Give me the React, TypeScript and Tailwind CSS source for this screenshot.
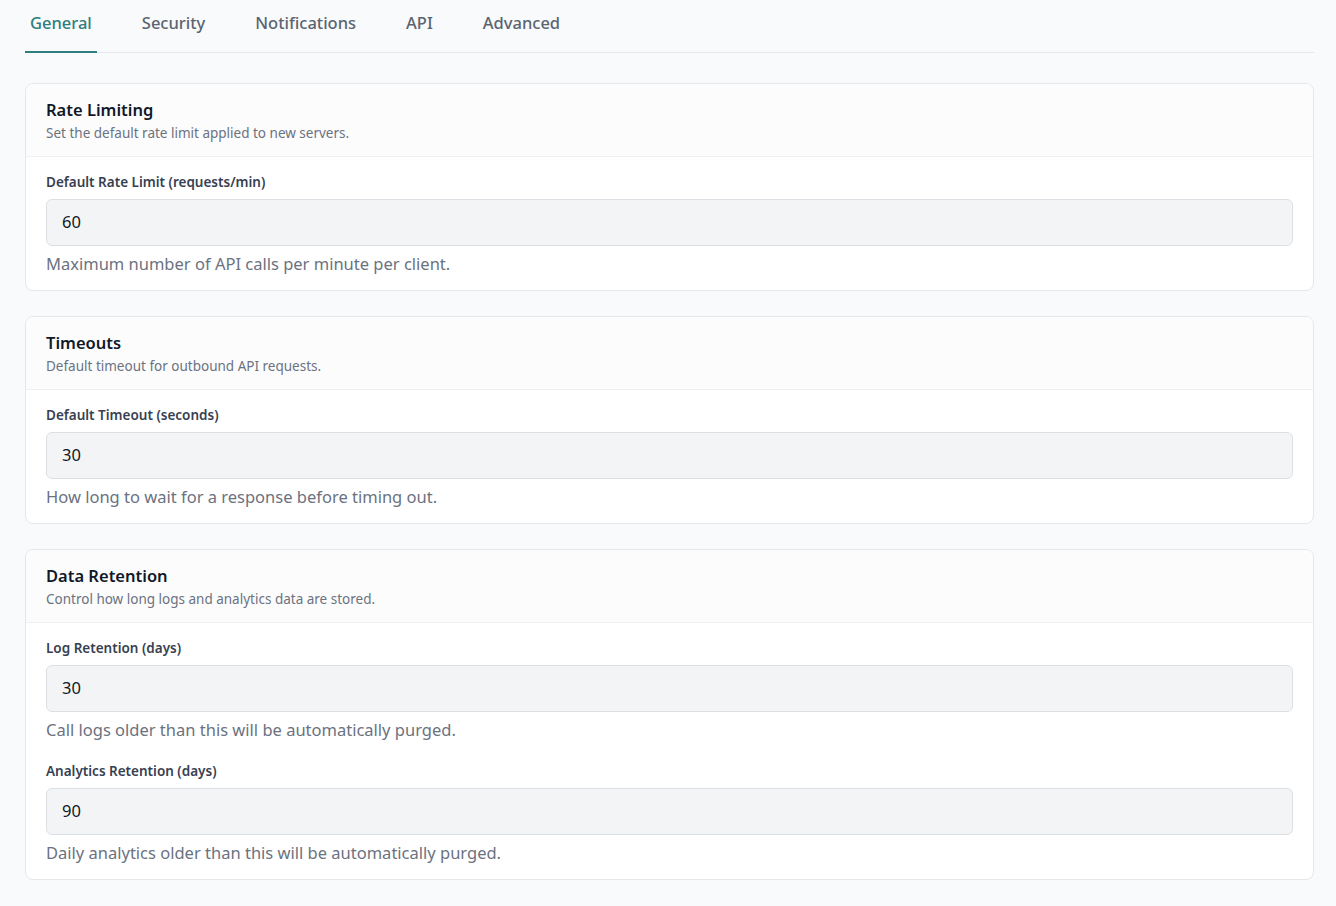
import React from "react";

const tabs = ["General", "Security", "Notifications", "API", "Advanced"];

function Field({ label, value, help }: { label: string; value: string; help: string }) {
  return (
    <div className="flex flex-col">
      <div className="text-[13.5px] font-semibold text-[#374151] leading-5">{label}</div>
      <div className="mt-[7px] h-[47px] rounded-md border border-[#dcdfe3] bg-[#f3f4f6] px-[15px] flex items-center text-[16.5px] text-[#111827]">{value}</div>
      <div className="mt-[6px] text-[16.5px] text-[#6b7280] leading-6">{help}</div>
    </div>
  );
}

function Card({ title, desc, children }: { title: string; desc: string; children: React.ReactNode }) {
  return (
    <div className="rounded-lg border border-[#e5e7eb] bg-white overflow-hidden">
      <div className="bg-[#fcfcfd] border-b border-[#eef0f2] px-[20px] pt-[14px] pb-[13px]">
        <div className="text-[16.5px] font-semibold text-[#111827] leading-6">{title}</div>
        <div className="text-[13.5px] text-[#6b7280] leading-5 mt-[1px]">{desc}</div>
      </div>
      <div className="px-[20px] pt-[15px] pb-[14px] flex flex-col gap-[19px]">{children}</div>
    </div>
  );
}

export default function App() {
  return (
    <div className="min-h-[906px] bg-[#f8fafc] px-[25px] pr-[22px]" style={{ fontFamily: '"Noto Sans", "Open Sans", sans-serif' }}>
      <div className="flex gap-[40px] border-b border-[#e5e7eb] h-[53px]">
        {tabs.map((t, i) => (
          <div key={t} className={`px-[5px] pt-[11px] text-[16.5px] font-medium h-[53px] border-b-2 ${i === 0 ? "text-[#2f7d7d] border-[#2f7d7d]" : "text-[#5b6470] border-transparent"}`}>{t}</div>
        ))}
      </div>
      <div className="flex flex-col gap-[25px] pt-[30px] pb-[20px]">
        <Card title="Rate Limiting" desc="Set the default rate limit applied to new servers.">
          <Field label="Default Rate Limit (requests/min)" value="60" help="Maximum number of API calls per minute per client." />
        </Card>
        <Card title="Timeouts" desc="Default timeout for outbound API requests.">
          <Field label="Default Timeout (seconds)" value="30" help="How long to wait for a response before timing out." />
        </Card>
        <Card title="Data Retention" desc="Control how long logs and analytics data are stored.">
          <Field label="Log Retention (days)" value="30" help="Call logs older than this will be automatically purged." />
          <Field label="Analytics Retention (days)" value="90" help="Daily analytics older than this will be automatically purged." />
        </Card>
      </div>
    </div>
  );
}
